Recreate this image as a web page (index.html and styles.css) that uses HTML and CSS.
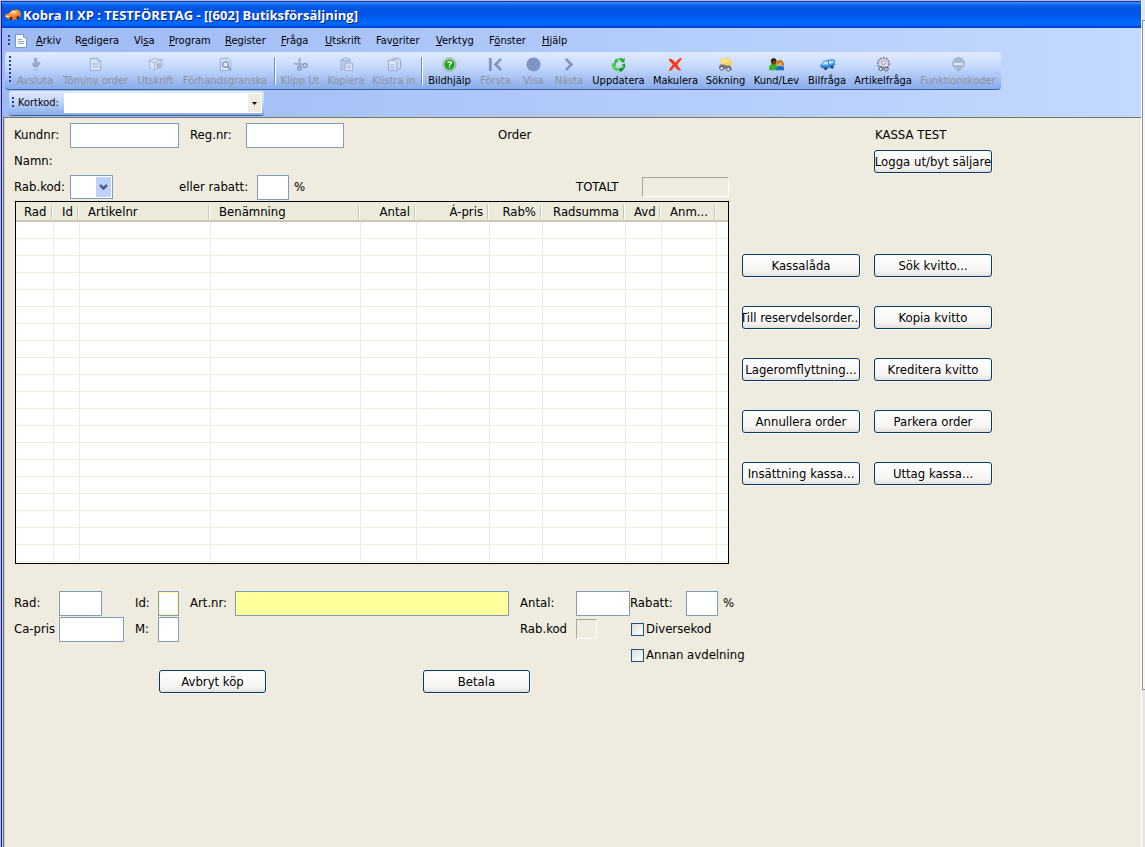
FILE: index.html
```html
<!DOCTYPE html>
<html lang="sv">
<head>
<meta charset="utf-8">
<title>Kobra II XP : TESTFÖRETAG</title>
<link rel="stylesheet" href="styles.css">
</head>
<body>
<div class="desktop">
<div class="window">
  <header class="titlebar">
    <svg class="car" width="16" height="14" viewBox="0 0 16 14"><path d="M0 7 4 5l3-3 6-.5 2 2 1 3-1 3-5 2-2 .5-5-1-3-2z" fill="#f07a1c"/><path d="M4.500 5.500 7.500 3l5-.5-2 3z" fill="#ffe0b4"/><path d="M1 7h7l3-1 4-2" stroke="#ffb46b" fill="none"/><circle cx="6" cy="10.500" r="1.500" fill="#3b2a30"/><circle cx="13" cy="9.500" r="1.500" fill="#3b2a30"/><path d="M1 8.500h3" stroke="#fff2c0"/></svg>
    <h1>Kobra II XP : TESTFÖRETAG - [[602] Butiksförsäljning]</h1>
  </header>
  <div class="chrome">
    <nav class="menubar">
      <i class="grip"></i>
      <svg class="doc" width="14" height="14" viewBox="0 0 14 14"><path d="M1.500.5h8l3 3v10h-11z" fill="#f8fbff" stroke="#7d97c4"/><path d="M9.500.5v3h3" fill="#c8d8f2" stroke="#7d97c4"/><path d="M4 5.500h4M4 7.500h6M4 9.500h6" stroke="#8ba4cf"/></svg>
      <ul>
        <li><a href="#"><u>A</u>rkiv</a></li><li><a href="#">R<u>e</u>digera</a></li><li><a href="#">Vi<u>s</u>a</a></li><li><a href="#"><u>P</u>rogram</a></li><li><a href="#"><u>R</u>egister</a></li><li><a href="#"><u>F</u>råga</a></li><li><a href="#"><u>U</u>tskrift</a></li><li><a href="#">Fav<u>o</u>riter</a></li><li><a href="#"><u>V</u>erktyg</a></li><li><a href="#">F<u>ö</u>nster</a></li><li><a href="#"><u>H</u>jälp</a></li>
      </ul>
    </nav>
    <div class="toolbar">
      <i class="grip tall"></i>
      <div class="tools">
        <button disabled><svg viewBox="0 0 16 16"><path d="M6.500 1h3l1 5 2-1 1 1-3 5H6L4 7l1-1 1.500 1z" fill="#96a9cc"/><path d="M5.500 12h5.500l-.5 3h-5z" fill="#b4c3df"/></svg>Avsluta</button>
        <button disabled><svg viewBox="0 0 16 16"><path d="M2.500 1.500h8l3 3v10h-11z" fill="#d8e3f6" stroke="#96aace"/><path d="M10.500 1.500v3h3M5 7.500h6M5 10.500h6" fill="none" stroke="#96aace"/></svg>Töm/ny order</button>
        <button disabled><svg viewBox="0 0 16 16"><path d="M1 4 6 2l9 1v9l-7 3-6-3z" fill="#dbe5f6"/><path d="m1 4 6 2 8-3M7 6v8M1 4l1 8 5 2 8-3V3L6 2z" fill="none" stroke="#a0b2d5"/><path d="m9 7 5-1v5l-5 2z" fill="#a7b8d9"/></svg>Utskrift</button>
        <button disabled><svg viewBox="0 0 16 16"><path d="M2.500 1.500h8l3 3v10h-11z" fill="#d8e3f6" stroke="#96aace"/><circle cx="8" cy="8" r="3" fill="#e5edfa" stroke="#879cc3" stroke-width="1.500"/><path d="m10 10 4 4" stroke="#879cc3" stroke-width="2"/></svg>Förhandsgranska</button>
        <i class="sep"></i>
        <button disabled><svg viewBox="0 0 16 16"><path d="m1 7 10 1M7 1v11" stroke="#98a9ca" stroke-width="2"/><circle cx="7" cy="12" r="2" fill="none" stroke="#879bc1" stroke-width="1.500"/><circle cx="13" cy="9" r="2" fill="none" stroke="#879bc1" stroke-width="1.500"/></svg>Klipp Ut</button>
        <button disabled><svg viewBox="0 0 16 16"><path d="M2 2.500h10v11H2z" fill="#b9c8e3" stroke="#a1b2d3"/><path d="M5 1h4v3H5z" fill="#dce6f6" stroke="#98aacc"/><path d="M6.500 6.500h8v8h-8z" fill="#dce6f7" stroke="#9eb0d2"/><path d="M8 9.500h5M8 11.500h5" stroke="#a4b5d6"/></svg>Kopiera</button>
        <button disabled><svg viewBox="0 0 16 16"><path d="M6.500 1.500h6l2 2v9h-8z" fill="#cddaf0" stroke="#92a6cb"/><path d="M1.500 3.500h7l2 2v9h-9z" fill="#dce6f7" stroke="#92a6cb"/><path d="M3 8.500h5M3 10.500h5M3 12.500h5" stroke="#a4b5d6"/></svg>Klistra in</button>
        <i class="sep"></i>
        <button><svg viewBox="0 0 16 16"><circle cx="8" cy="8" r="7" fill="#d8e0d8" stroke="#8e9c94"/><circle cx="8" cy="8" r="5.500" fill="#1ea51e"/><path d="M6 6.500c0-2 4-2 4 0 0 1-2 1-2 2.500M8 10v1.500" stroke="#fff" stroke-width="1.500" fill="none"/></svg>Bildhjälp</button>
        <button disabled><svg viewBox="0 0 16 16"><path d="M2.500 1v14M14 2 8 8l6 6" stroke="#8096c2" stroke-width="3" fill="none"/></svg>Första</button>
        <button disabled><svg viewBox="0 0 16 16"><circle cx="8" cy="8" r="7.500" fill="#7f95c1"/></svg>Visa</button>
        <button disabled><svg viewBox="0 0 16 16"><path d="m4 2 6 6-6 6" stroke="#8096c2" stroke-width="3" fill="none"/></svg>Nästa</button>
        <button><svg viewBox="0 0 16 16"><path d="M3 6 5 2l6-1 2 1 2-1-1 5-4-1 1-1-2-1-3 3z" fill="#22b02e"/><path d="m1 7 5-1-1 2 1 4h2v3l-4-1-3-4z" fill="#3ccc3a"/><path d="m9 12 3-1V8l3-1v4l-3 4-2 1-2-3 2-2z" fill="#149326"/><path d="m6 4 3-2M3 9l2 3M13 9l-1 3" stroke="#a8f59a"/></svg>Uppdatera</button>
        <button><svg viewBox="0 0 16 16"><path d="M1 2c2-1 5 1 7 4 2-3 4-5 7-5-1 3-3 4-5 7 1 3 3 4 4 6-3 1-5-1-7-4-2 3-4 5-6 5 0-3 3-5 4-7-1-2-4-3-4-6z" fill="#f4391c"/></svg>Makulera</button>
        <button><svg viewBox="0 0 16 16"><path d="m1 3 9-3 5 5-1 5H6z" fill="#f5d560"/><path d="m3 4 7-2M4 6l8-2" stroke="#fff3bd"/><path d="M2 8h4l3 1h4l2 4-3 2-3-3-2 1-2 1-4-2z" fill="#777788"/><circle cx="4" cy="12" r="2" fill="#d7e6f5" stroke="#555"/><circle cx="11" cy="13" r="2" fill="#d7e6f5" stroke="#555"/></svg>Sökning</button>
        <button><svg viewBox="0 0 16 16"><path d="M0 14v-4l3-3h4l2 3v4z" fill="#38b530"/><circle cx="5" cy="5" r="3" fill="#6d3b11"/><path d="M2 5c-1-5 7-5 6 0L6 3z" fill="#201008"/><path d="M8 14v-3l2-2h3l3 2v3z" fill="#1d68d9"/><circle cx="11.500" cy="6.500" r="3" fill="#f0b060"/><path d="M8 9c-1-8 9-8 8 1l-2-1-1-4z" fill="#c87818"/></svg>Kund/Lev</button>
        <button><svg viewBox="0 0 16 16"><path d="m0 9 4-5 9-2 3 1v6l-8 4-7-1z" fill="#4aa2e8"/><path d="m2 8 3-3 9-1v2L8 8z" fill="#c3e7ff"/><path d="M9 4v4" stroke="#2c73b7"/><path d="m1 10 6 1 8-3" stroke="#2264a8" fill="none"/><circle cx="6" cy="12.500" r="1.500" fill="#263b55"/><circle cx="13" cy="11" r="1.500" fill="#263b55"/></svg>Bilfråga</button>
        <button><svg viewBox="0 0 16 16"><circle cx="8" cy="7" r="6" fill="#dcd6ea" stroke="#8c84a8" stroke-width="2" stroke-dasharray="2 1"/><circle cx="8" cy="6" r="2" fill="#f6f3ff" stroke="#9991b0"/><circle cx="5" cy="12.500" r="2" fill="#bce2ea" stroke="#555"/><circle cx="11" cy="13" r="2" fill="#bce2ea" stroke="#555"/><path d="m4 10 3 1h3l2 1" stroke="#666" fill="none"/></svg>Artikelfråga</button>
        <button disabled><svg viewBox="0 0 16 16"><path d="M8 0a7 7 0 0 1 7 7c0 4-4 6-7 9-3-3-7-5-7-9a7 7 0 0 1 7-7z" fill="#a9b8d3"/><path d="M3 7.500h10" stroke="#e3ebf8" stroke-width="2"/></svg>Funktionskoder</button>
      </div>
    </div>
    <div class="codebar">
      <i class="grip"></i>
      <label for="kortkod">Kortkod:</label>
      <span class="combo"><select id="kortkod"><option></option></select><svg width="13" height="18" viewBox="0 0 13 18"><path fill="#efebde" d="M0 0h13v18H0z"/><path d="M4 8h5L6.500 11z"/></svg></span>
    </div>
  </div>
  <main>
    <section class="order">
      <div class="entry">
        <div class="row r1"><label for="kund">Kundnr:</label><input id="kund"><label for="reg" class="reg">Reg.nr:</label><input id="reg"><span class="title">Order</span></div>
        <div class="row"><span>Namn:</span></div>
        <div class="row r3"><label for="rabkod">Rab.kod:</label><span class="xpselect"><select id="rabkod"><option></option></select><svg width="15" height="20" viewBox="0 0 15 20"><rect width="15" height="20" rx="1" fill="#c0d2fc"/><path d="m4 8 3.500 3.500L11 8" fill="none" stroke="#4d6185" stroke-width="2.500"/></svg></span><label for="rabatt" class="discount">eller rabatt:</label><input id="rabatt"><span class="percent">%</span><label for="total">TOTALT</label><output id="total" class="sunken"></output></div>
        <div class="tablebox">
          <table>
            <colgroup><col class="c1"><col class="c2"><col class="c3"><col class="c4"><col class="c5"><col class="c6"><col class="c7"><col class="c8"><col class="c9"><col class="c10"><col></colgroup>
            <thead><tr><th>Rad</th><th>Id</th><th>Artikelnr</th><th>Benämning</th><th class="num">Antal</th><th class="num">Á-pris</th><th class="num">Rab%</th><th class="num">Radsumma</th><th>Avd</th><th>Anm...</th><th></th></tr></thead>
            <tbody id="rows"></tbody>
          </table>
        </div>
      </div>
      <aside class="actions">
        <span class="till">KASSA TEST</span>
        <button class="btn logout">Logga ut/byt säljare</button>
        <div class="grid">
          <button class="btn">Kassalåda</button><button class="btn">Sök kvitto...</button>
          <button class="btn">Till reservdelsorder...</button><button class="btn">Kopia kvitto</button>
          <button class="btn">Lageromflyttning...</button><button class="btn">Kreditera kvitto</button>
          <button class="btn">Annullera order</button><button class="btn">Parkera order</button>
          <button class="btn">Insättning kassa...</button><button class="btn">Uttag kassa...</button>
        </div>
      </aside>
    </section>
    <section class="line">
      <label for="rad">Rad:</label><input id="rad" class="w43"><label for="lid">Id:</label><input id="lid" class="w21 focus"><label for="art">Art.nr:</label><input id="art" class="w274 yellow"><label for="antal">Antal:</label><input id="antal" class="w54"><label for="rab2">Rabatt:</label><input id="rab2" class="w32"><span>%</span>
      <label for="pris">Ca-pris</label><input id="pris" class="w65"><label for="m">M:</label><input id="m" class="w21"><label for="code" class="skip">Rab.kod</label><output id="code" class="sunken small"></output><label class="check"><input type="checkbox">Diversekod</label>
      <label class="check third"><input type="checkbox">Annan avdelning</label>
    </section>
    <div class="finish"><button class="btn">Avbryt köp</button><button class="btn">Betala</button></div>
  </main>
</div>
<div class="edge"><i></i></div>
</div>
<script src="rows.js"></script>
</body>
</html>
```
FILE: rows.js
```js
const body = document.getElementById('rows');
for (let r = 0; r < 20; r++) {
  const row = body.insertRow();
  for (let c = 0; c < 11; c++) row.insertCell();
}
```
FILE: styles.css
```css
* { box-sizing: border-box; }
body { margin: 0; font: 13px/16px "DejaVu Sans Condensed", "DejaVu Sans", sans-serif; color: #000; }
button, input, select { font: inherit; color: inherit; margin: 0; padding: 0; border-radius: 0; }
ul { list-style: none; margin: 0; padding: 0; }
a { color: inherit; text-decoration: none; }
.desktop { display: flex; min-height: 100vh; background: #b0b8f0; }
.window { flex: 1; min-width: 0; display: flex; flex-direction: column; margin: 1px 0 0 1px; border-left: 1px solid #20208c; border-top: 1px solid #20308c; background: #b4c4f4; padding-left: 1px; }
.edge { width: 4px; background: #e6e6e6; border-left: 1px solid #fff; padding-top: 20px; }
.edge i { display: block; height: 670px; background: #f6f6f6; border: solid #8c8c94; border-width: 1px 0 1px 1px; }

.titlebar { display: flex; align-items: center; height: 26px; margin-left: -1px; padding: 0 0 0 3px; gap: 2px; background: linear-gradient(#3c94ff 0, #0a64f0 3px, #0054e3 6px, #0056ea 13px, #0068ff 20px, #0066ff 23px, #0040d0 25px); }
.titlebar h1 { margin: 0; font: bold 13px/18px "Open Sans", "Noto Sans", sans-serif; color: #fff; text-shadow: 1px 1px 0 #0c2478; white-space: nowrap; }

.chrome { display: flex; flex-direction: column; margin-left: -1px; font-size: 11px; line-height: 14px; background: linear-gradient(90deg, #9dbaf4, #c4d9ff); height: 89px; }
.grip { width: 2px; height: 12px; background: repeating-linear-gradient(#27418c 0 2px, transparent 2px 4px); }
.grip.tall { height: 28px; margin: 4px 0 0 4px; }
.menubar { display: flex; align-items: center; height: 24px; padding: 1px 0 0 6px; }
.doc { margin-left: 4px; }
.menubar ul { display: grid; grid-template-columns: 39px 59px 35px 56px 56px 44px 51px 60px 53px 53px auto; margin-left: 8px; }
.menubar u { text-underline-offset: 1px; }
.toolbar { display: flex; align-self: flex-start; height: 38px; margin-left: 3px; padding-right: 1px; border-bottom: 1px solid #3b619c; border-radius: 3px 3px 4px 4px; background: linear-gradient(#e0ebff, #c6d9fc 40%, #88abea); }
.tools { display: grid; margin-left: 1px; grid-template-columns: 46px 75px 45px 94px 5px 46px 46px 50px 6px 49px 43px 33px 38px 61px 53px 47px 55px 46px 66px 84px; }
.tools button { display: flex; flex-direction: column; align-items: center; padding-top: 5px; gap: 2px; border: 0; background: none; white-space: nowrap; line-height: 14px; }
.tools button:disabled { color: #8d9299; }
.tools svg { width: 15px; height: 15px; flex: none; }
.sep { justify-self: center; width: 2px; height: 28px; margin-top: 5px; background: linear-gradient(90deg, #6a8ccb 50%, #fff 50%); }
.codebar { display: flex; align-items: center; align-self: flex-start; height: 25px; margin: 1px 0 0 7px; padding: 0 2px 0 3px; border-bottom: 1px solid #3b619c; border-radius: 3px; background: linear-gradient(#e0ebff, #c6d9fc 40%, #88abea); }
.codebar label { width: 46px; margin-left: 4px; }
.combo, .xpselect { display: grid; align-items: center; }
.combo > *, .xpselect > * { grid-area: 1 / 1; }
.combo svg, .xpselect svg { justify-self: end; pointer-events: none; margin-right: 1px; }
.combo select { width: 198px; height: 20px; appearance: none; border: 0; background: #fff; }

main { flex: 1; padding: 5px 0 24px 10px; background: #efebde; border-left: 1px solid #7b7566; border-top: 1px solid #7b7566; box-shadow: inset 1px 0 #d8d2c0; }
.order { display: grid; grid-template-columns: 715px 250px; column-gap: 13px; }
.row { display: grid; height: 26px; white-space: nowrap; }
.row, .line { line-height: 24px; }
.row input, .line input { height: 25px; border: 1px solid #7f9db9; background: #fff; outline: 0; }
.row input { width: 100%; }
.r1 { grid-template-columns: 56px 109px 11px 56px 98px 154px auto; }
.r1 .reg { grid-column: 4; }
.r1 .title { grid-column: 7; }
.r3 { grid-template-columns: 56px 43px 66px 78px 32px 5px 282px 66px 87px; }
.r3 .discount { grid-column: 4; }
.r3 .percent { grid-column: 7; }
.xpselect { align-self: start; }
.xpselect select { width: 43px; height: 24px; appearance: none; border: 1px solid #7f9db9; background: #fff; }
.xpselect svg { margin-right: 2px; }
.sunken { height: 20px; margin-top: 2px; border: 1px solid; border-color: #aca899 #fff #fff #aca899; }
.tablebox { margin-left: 1px; width: 714px; height: 363px; border: 1px solid #000; background: #fff; overflow: hidden; }
table { width: 100%; table-layout: fixed; border-collapse: separate; border-spacing: 0; }
.c1 { width: 38px; } .c2 { width: 26px; } .c3 { width: 131px; } .c4 { width: 150px; } .c5 { width: 56px; }
.c6 { width: 73px; } .c7 { width: 53px; } .c8 { width: 83px; } .c9 { width: 36px; } .c10 { width: 55px; }
th { height: 20px; padding: 2px 0 0 8px; font-weight: normal; text-align: left; line-height: 16px; white-space: nowrap; border-bottom: 2px solid #cbc7b8; background: linear-gradient(90deg, #c7c5b2 50%, #fff 50%) right 1px top 3px / 2px 14px no-repeat #ebeadb; }
th:last-child { background: #ebeadb; }
th.num { text-align: right; padding: 2px 7px 0 0; }
td { height: 17px; padding: 0; border-right: 1px solid #efebde; border-bottom: 1px solid #efebde; }
td:last-child { border-right: 0; }

.btn { display: flex; align-items: center; justify-content: center; width: 118px; height: 23px; padding: 0 1px; overflow: hidden; white-space: nowrap; border: 1px solid #003c74; border-radius: 3px; background: linear-gradient(#fff, #f7f5f2 75%, #e4dfda); box-shadow: 1px 1px 0 #f8f6ee; }
.actions { display: flex; flex-direction: column; }
.till { height: 27px; line-height: 24px; margin-left: 133px; }
.logout { margin-left: 132px; }
.grid { display: grid; grid-template-columns: 118px 118px; gap: 29px 14px; margin-top: 81px; }

.line { display: grid; grid-template-columns: 45px 76px 23px 32px 45px 285px 56px 54px 56px 37px auto; grid-auto-rows: 26px; margin-top: 27px; white-space: nowrap; }
.line .w21 { width: 21px; } .line .w32 { width: 32px; } .line .w43 { width: 43px; } .line .w54 { width: 54px; } .line .w65 { width: 65px; } .line .w274 { width: 274px; }
.line .yellow { background: #ffff9c; }
.line .focus { box-shadow: inset 0 0 0 1px #ffff9c; }
.skip { grid-column: 7; }
.small { width: 21px; }
.check { display: flex; align-items: center; align-self: start; gap: 2px; grid-column: 9 / -1; padding-left: 1px; }
.third { grid-row: 3; }
.line .check input { appearance: none; width: 13px; height: 13px; border-color: #1c5180; background: linear-gradient(135deg, #dcdcd7, #fff); }
.finish { display: flex; gap: 157px; margin: 1px 0 0 145px; }
.finish .btn { width: 107px; }
```
